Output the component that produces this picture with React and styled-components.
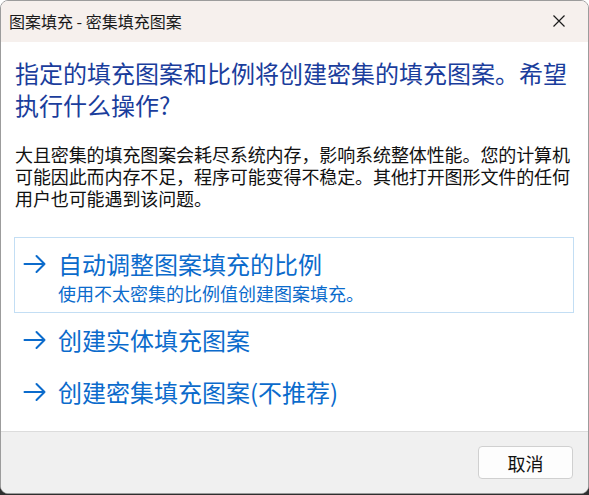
import React from "react";
import styled, { createGlobalStyle } from "styled-components";

const GlobalStyle = createGlobalStyle`
  html, body {
    margin: 0;
    padding: 0;
  }
  html {
    background: linear-gradient(to bottom, #ffffff 0, #ffffff 470px, #2f2f2f 470px);
    min-height: 100%;
  }
  body {
    font-family: "Noto Sans CJK SC", "Noto Sans", "Liberation Sans", sans-serif;
    -webkit-font-smoothing: antialiased;
  }
`;

const links = [
  { title: "自动调整图案填充的比例", note: "使用不太密集的比例值创建图案填充。", focused: true },
  { title: "创建实体填充图案" },
  { title: "创建密集填充图案(不推荐)" },
];

const ArrowIcon = () => (
  <svg width="24" height="24" viewBox="0 0 24 24" fill="none">
    <path
      d="M1.5 12h20M13.5 4l8 8-8 8"
      stroke="currentColor"
      strokeWidth="2"
      strokeLinecap="round"
      strokeLinejoin="round"
    />
  </svg>
);

const CloseIcon = () => (
  <svg width="14" height="14" viewBox="0 0 14 14" fill="none">
    <path d="M1.5 1.5l11 11M12.5 1.5l-11 11" stroke="#1b1b1b" strokeWidth="1.2" />
  </svg>
);

const App = () => {
  return (
    <>
      <GlobalStyle />
      <Window>
        <TitleBar>
          <Title>图案填充 - 密集填充图案</Title>
          <CloseButton>
            <CloseIcon />
          </CloseButton>
        </TitleBar>
        <Content>
          <Instruction>
            指定的填充图案和比例将创建密集的填充图案。希望执行什么操作?
          </Instruction>
          <Message>
            大且密集的填充图案会耗尽系统内存，影响系统整体性能。您的计算机可能因此而内存不足，程序可能变得不稳定。其他打开图形文件的任何用户也可能遇到该问题。
          </Message>
          <LinkList>
            {links.map((link) => (
              <CommandLink key={link.title} $focused={link.focused}>
                <Arrow>
                  <ArrowIcon />
                </Arrow>
                <LinkText>
                  <LinkTitle>{link.title}</LinkTitle>
                  {link.note ? <LinkNote>{link.note}</LinkNote> : null}
                </LinkText>
              </CommandLink>
            ))}
          </LinkList>
        </Content>
        <Footer>
          <Button>取消</Button>
        </Footer>
      </Window>
    </>
  );
};

const Window = styled.div`
  width: 589px;
  height: 494px;
  box-sizing: border-box;
  display: flex;
  flex-direction: column;
  background: #ffffff;
  border: 1px solid #9c9c9c;
  border-radius: 8px;
  overflow: hidden;
`;

const TitleBar = styled.div`
  height: 41px;
  flex: none;
  display: flex;
  align-items: center;
  justify-content: space-between;
  padding: 0 0 0 8px;
  background: #f6f0ed;
`;

const Title = styled.div`
  font-size: 16px;
  line-height: 20px;
  color: #1a1a1a;
  margin-top: -1px;
`;

const CloseButton = styled.div`
  width: 46px;
  height: 41px;
  display: flex;
  align-items: center;
  justify-content: center;
  margin-right: 6px;
  margin-top: -1px;
`;

const Content = styled.div`
  flex: 1;
  padding: 15px 10px 0 14px;
  display: flex;
  flex-direction: column;
`;

const Instruction = styled.div`
  font-size: 24px;
  line-height: 32px;
  color: #1a3d9c;
`;

const Message = styled.div`
  margin-top: 22px;
  font-size: 18px;
  line-height: 22px;
  color: #111111;
  letter-spacing: -0.1px;
`;

const LinkList = styled.div`
  margin: 28px 4px 0 -1px;
  display: flex;
  flex-direction: column;
`;

const CommandLink = styled.div`
  display: flex;
  align-items: flex-start;
  gap: 11px;
  padding: 10px 8px 8px 8px;
  border: 1px solid ${(p) => (p.$focused ? "#c3def4" : "transparent")};
  color: #0b6bcc;
`;

const Arrow = styled.div`
  height: 32px;
  display: flex;
  align-items: center;
  flex: none;
`;

const LinkText = styled.div`
  display: flex;
  flex-direction: column;
`;

const LinkTitle = styled.div`
  font-size: 24px;
  line-height: 32px;
`;

const LinkNote = styled.div`
  margin-top: 2px;
  font-size: 18px;
  line-height: 22px;
`;

const Footer = styled.div`
  height: 62px;
  flex: none;
  box-sizing: border-box;
  display: flex;
  align-items: center;
  justify-content: flex-end;
  padding: 0 15px 0 0;
  background: #f0f0f0;
  border-top: 1px solid #dcdcdc;
`;

const Button = styled.div`
  width: 95px;
  height: 33px;
  box-sizing: border-box;
  display: flex;
  align-items: center;
  justify-content: center;
  background: #fdfdfd;
  border: 1px solid #d0d0d0;
  border-radius: 4px;
  font-size: 18px;
  color: #111111;
`;

export default App;
